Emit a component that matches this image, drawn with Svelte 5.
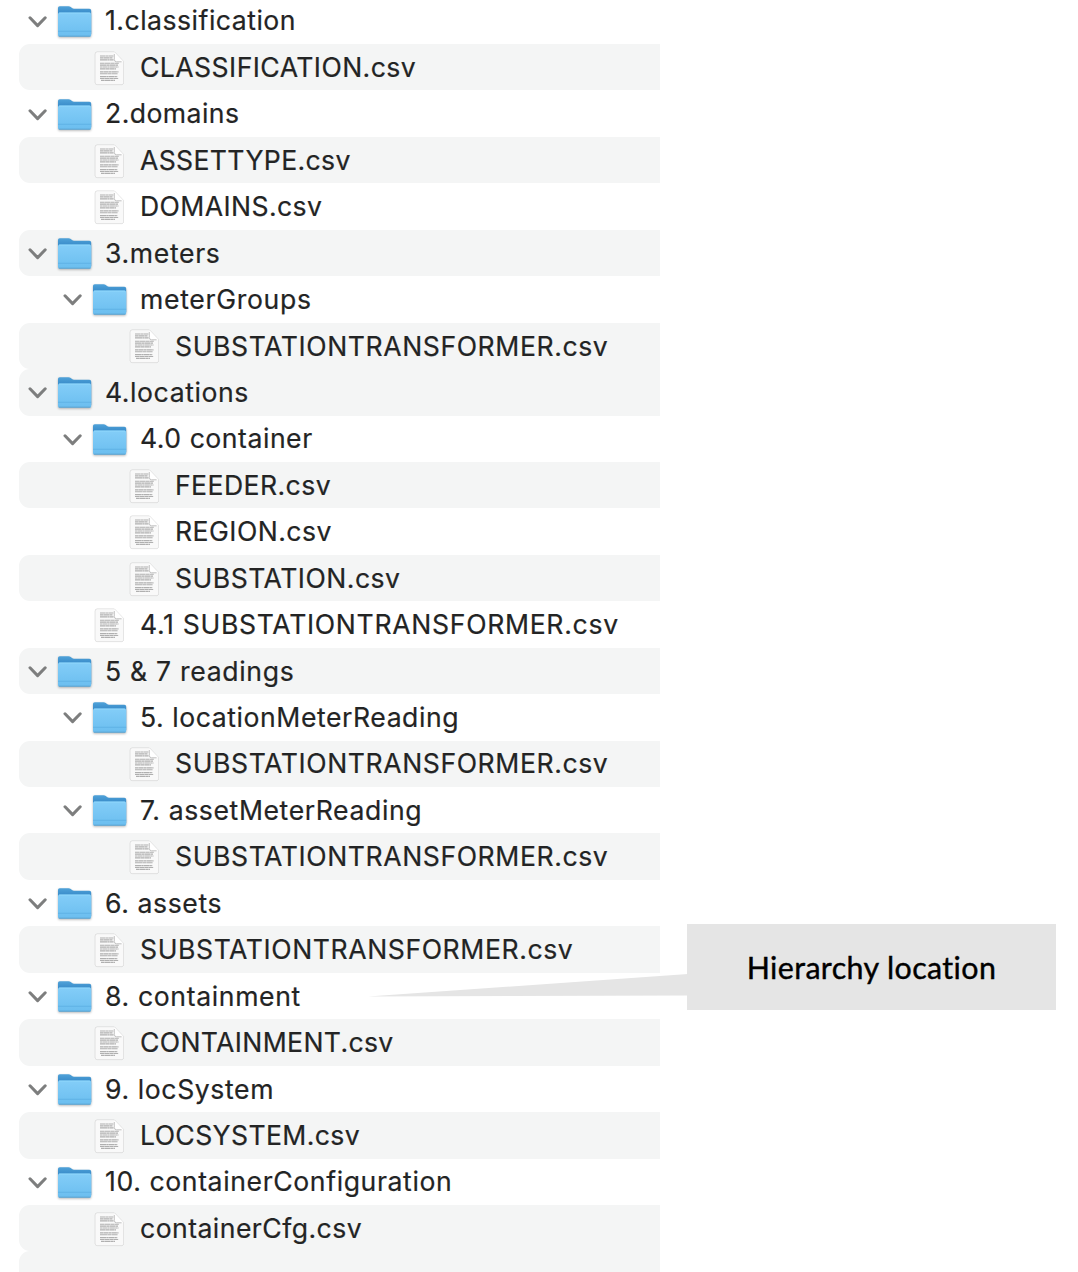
<script>
  // name, depth, kind, striped, letter spacing
  const rows = [
    ['1.classification', 0, 'folder', false, 0.5],
    ['CLASSIFICATION.csv', 1, 'file', true, 0.43],
    ['2.domains', 0, 'folder', false, 0.43],
    ['ASSETTYPE.csv', 1, 'file', true, 0.35],
    ['DOMAINS.csv', 1, 'file', false, 0.4],
    ['3.meters', 0, 'folder', true, 0.66],
    ['meterGroups', 1, 'folder', false, 0.68],
    ['SUBSTATIONTRANSFORMER.csv', 2, 'file', true, 0.58],
    ['4.locations', 0, 'folder', true, 0.57],
    ['4.0 container', 1, 'folder', false, 0.53],
    ['FEEDER.csv', 2, 'file', true, 0.42],
    ['REGION.csv', 2, 'file', false, 0.45],
    ['SUBSTATION.csv', 2, 'file', true, 0.48],
    ['4.1 SUBSTATIONTRANSFORMER.csv', 1, 'file', false, 0.69],
    ['5 & 7 readings', 0, 'folder', true, 0.69],
    ['5. locationMeterReading', 1, 'folder', false, 0.56],
    ['SUBSTATIONTRANSFORMER.csv', 2, 'file', true, 0.58],
    ['7. assetMeterReading', 1, 'folder', false, 0.6],
    ['SUBSTATIONTRANSFORMER.csv', 2, 'file', true, 0.58],
    ['6. assets', 0, 'folder', false, 0.6],
    ['SUBSTATIONTRANSFORMER.csv', 1, 'file', true, 0.58],
    ['8. containment', 0, 'folder', false, 0.64],
    ['CONTAINMENT.csv', 1, 'file', true, 0.35],
    ['9. locSystem', 0, 'folder', false, 0.6],
    ['LOCSYSTEM.csv', 1, 'file', true, 0.37],
    ['10. containerConfiguration', 0, 'folder', false, 0.61],
    ['containerCfg.csv', 1, 'file', true, 0.45],
    ['', 0, 'empty', true, 0]
  ].map(([name, depth, kind, striped, tracking]) => ({ name, depth, kind, striped, tracking }));
</script>

<svg class="defs" width="0" height="0" aria-hidden="true">
  <defs>
    <linearGradient id="folder-front" x1="0" y1="0" x2="0" y2="1">
      <stop offset="0" stop-color="#83cdf8" />
      <stop offset="1" stop-color="#6bbeef" />
    </linearGradient>
    <linearGradient id="folder-back" x1="0" y1="0" x2="0" y2="1">
      <stop offset="0" stop-color="#4fa2d9" />
      <stop offset="0.3" stop-color="#3587c6" />
      <stop offset="1" stop-color="#3587c6" />
    </linearGradient>
  </defs>
</svg>

<main>
  <ul class="tree">
    {#each rows as row}
      <li class="row depth-{row.depth}" class:striped={row.striped}>
        {#if row.kind !== 'empty'}
          <span class="toggle">
            {#if row.kind === 'folder'}
              <svg width="20" height="14" viewBox="0 0 20 14">
                <path d="M2 2.8 9.6 10.6 17.2 2.8" fill="none" stroke="#7d7e7e" stroke-width="3" stroke-linecap="round" stroke-linejoin="round" />
              </svg>
            {/if}
          </span>
          {#if row.kind === 'folder'}
            <svg class="icon folder" width="36" height="36" viewBox="0 0 36 36">
              <path d="M1 4Q1 2.3 2.7 2.3H11.5Q12.8 2.3 13.8 3.1L15 4.1Q15.8 4.7 17 4.7H32.3Q34.2 4.7 34.2 6.6V30H1Z" fill="url(#folder-back)" />
              <path d="M1 10.4Q1 8.6 2.8 8.6H32.4Q34.2 8.6 34.2 10.4V31Q34.2 32.6 32.4 32.6H2.8Q1 32.6 1 31Z" fill="url(#folder-front)" />
              <path d="M2 9.1H33.2" stroke="#92dafc" stroke-width=".8" />
              <path d="M1 27.3H34.2" stroke="#5caee2" stroke-width=".8" />
              <path d="M1.8 32.2H33.4" stroke="#569fce" stroke-width=".9" />
            </svg>
          {:else}
            <svg class="icon file" width="36" height="36" viewBox="0 0 36 36">
              <path d="M5.2 1H22.4L31.5 10.4V31.6Q31.5 33.6 29.5 33.6H5.2Q3.2 33.6 3.2 31.6V3Q3.2 1 5.2 1Z" fill="#f9f9f9" stroke="#e6e6e6" stroke-width=".5" />
              <g stroke="#b0b0b0" stroke-width="1.15" fill="none">
                <path d="M8 5H21.4" stroke-dasharray="5 .3 3 .3" />
                <path d="M8 6.9H20.5" stroke-dasharray="3 .3 6 .3" />
                <path d="M8 8.8H21.6" stroke-dasharray="7 .3 2 .3" />
                <path d="M8 12.2H26.8" stroke-dasharray="4 .3 6 .3" />
                <path d="M8 14.1H26" stroke-dasharray="6 .3 3 .3" />
                <path d="M8 16H26.5" stroke-dasharray="2 .3 5 .3" />
                <path d="M8 17.9H24" stroke-dasharray="5 .3 4 .3" />
                <path d="M8 20.8H26.5" stroke-dasharray="3 .3 5 .3" />
                <path d="M8 22.7H25.6" stroke-dasharray="7 .3 4 .3" />
                <path d="M8 25.6H25.5" stroke-dasharray="6 .3 2 .3" />
                <path d="M8 27.5H26.2" stroke-dasharray="4 .3 5 .3" />
                <path d="M9 29.4H23" stroke-dasharray="3 .3 6 .3" />
              </g>
              <path d="M22.4 1.2V8.4Q22.4 10.4 24.4 10.4H31.3Z" fill="#fff" />
              <path d="M22.3 3V8.4Q22.3 10.8 24.6 10.8H29.6" fill="none" stroke="#bcbcbc" stroke-width=".9" />
            </svg>
          {/if}
          <span class="name" style:letter-spacing="{row.tracking}px">{row.name}</span>
        {/if}
      </li>
    {/each}
  </ul>

  <aside class="callout">
    <svg class="pointer" width="320" height="24" viewBox="0 0 320 24">
      <path d="M0 22.5 320 0V21.5Z" fill="#e5e5e5" />
    </svg>
    <span>Hierarchy location</span>
  </aside>
</main>

<style>
  :global(body) {
    margin: 0;
    background: #fff;
  }
  .defs {
    position: absolute;
  }
  main {
    position: relative;
    width: 1078px;
    height: 1272px;
    overflow: hidden;
  }
  .tree {
    list-style: none;
    margin: -2.4px 0 0 19px;
    padding: 0;
    width: 641px;
  }
  .row {
    display: flex;
    align-items: center;
    height: 46.45px;
    box-sizing: border-box;
    border-radius: 11px 0 0 11px;
    font: 400 26.6px/46px Inter, sans-serif;
    color: #232424;
    white-space: pre;
  }
  .striped {
    background: #f4f5f5;
  }
  .depth-0 {
    padding-left: 9px;
  }
  .depth-1 {
    padding-left: 44px;
  }
  .depth-2 {
    padding-left: 79px;
  }
  .toggle {
    display: flex;
    width: 29px;
    flex: none;
    margin-top: 2px;
  }
  .icon {
    flex: none;
    margin: 2px 12px 0 0;
    filter: drop-shadow(0 1px 0.8px rgb(0 0 0 / 0.28));
  }
  .file {
    margin-top: 3px;
    filter: drop-shadow(0 0.8px 0.7px rgb(0 0 0 / 0.26));
  }
  .name {
    margin-top: -0.7px;
    -webkit-text-stroke: 0.2px #232424;
  }
  .callout {
    position: absolute;
    left: 687px;
    top: 924px;
    width: 369px;
    height: 86px;
    display: flex;
    align-items: center;
    justify-content: center;
    background: #e5e5e5;
    color: #000;
    font: 400 30.4px/1 Lato, sans-serif;
    font-variant-ligatures: none;
    letter-spacing: 0.38px;
    -webkit-text-stroke: 0.4px #000;
  }
  .callout span {
    margin-top: 1px;
  }
  .pointer {
    position: absolute;
    left: -319px;
    top: 50px;
  }
</style>
